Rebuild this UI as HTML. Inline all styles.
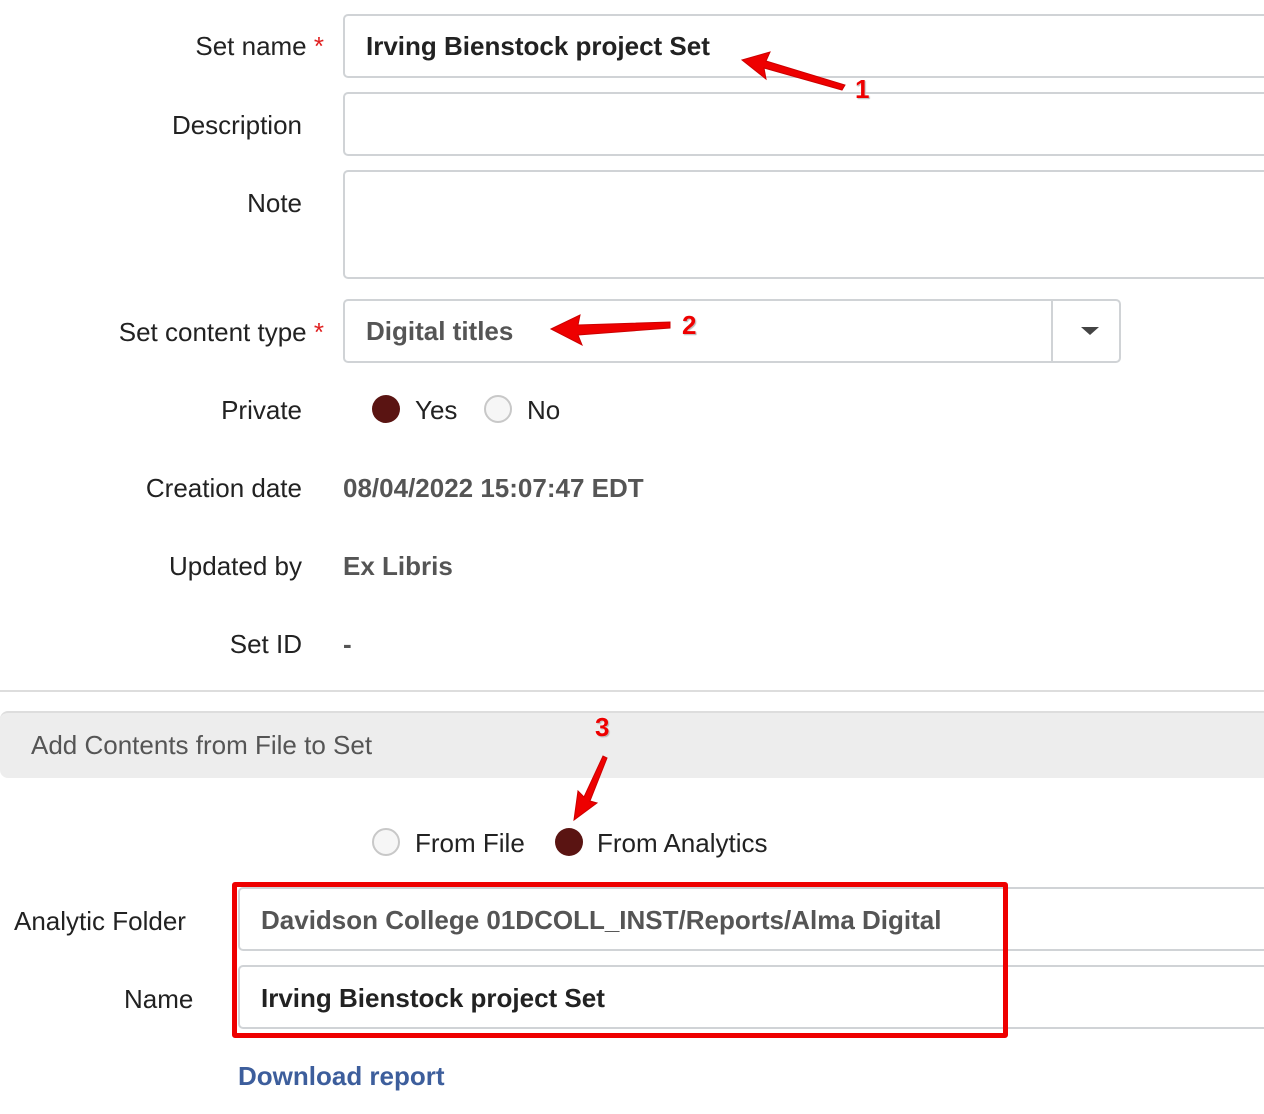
<!DOCTYPE html>
<html><head><meta charset="utf-8"><style>
body{margin:0;width:1264px;height:1114px;overflow:hidden;background:#fff;font-family:"Liberation Sans",sans-serif;position:relative;color:#222}
.a{position:absolute}
.lbl{position:absolute;font-size:26px;color:#222;text-align:right;right:962px;white-space:nowrap}
.req{color:#e02020}
.inp{position:absolute;border:2px solid #d0d3d6;border-radius:5px;background:#fff;box-sizing:border-box}
.val{position:absolute;font-size:26px;font-weight:bold;color:#555;white-space:nowrap}
.rad{position:absolute;width:28px;height:28px;border-radius:50%;box-sizing:border-box}
.on{background:#5a1412}
.off{background:#f6f6f6;border:2px solid #c8c8c8}
.num{position:absolute;font-size:26px;font-weight:bold;color:#e00;text-shadow:0 0 2px #fff,1px 1px 1px #999}
</style></head><body>
<div class="lbl" style="top:31px;right:940px">Set name <span class="req">*</span></div>
<div class="inp" style="left:343px;top:14px;width:940px;height:64px"></div>
<div class="val" style="left:366px;top:31px;color:#222">Irving Bienstock project Set</div>

<div class="lbl" style="top:110px">Description</div>
<div class="inp" style="left:343px;top:92px;width:940px;height:64px"></div>
<div class="lbl" style="top:188px">Note</div>
<div class="inp" style="left:343px;top:170px;width:940px;height:109px"></div>

<div class="lbl" style="top:317px;right:940px">Set content type <span class="req">*</span></div>
<div class="inp" style="left:343px;top:299px;width:778px;height:64px"></div>
<div class="a" style="left:1051px;top:301px;width:2px;height:60px;background:#d0d3d6"></div>
<div class="a" style="left:1081px;top:327px;width:0;height:0;border-left:9px solid transparent;border-right:9px solid transparent;border-top:8px solid #444"></div>
<div class="val" style="left:366px;top:316px">Digital titles</div>

<div class="lbl" style="top:395px">Private</div>
<div class="rad on" style="left:372px;top:395px"></div>
<div class="a" style="left:415px;top:395px;font-size:26px">Yes</div>
<div class="rad off" style="left:484px;top:395px"></div>
<div class="a" style="left:527px;top:395px;font-size:26px">No</div>

<div class="lbl" style="top:473px">Creation date</div>
<div class="val" style="left:343px;top:473px">08/04/2022 15:07:47 EDT</div>
<div class="lbl" style="top:551px">Updated by</div>
<div class="val" style="left:343px;top:551px">Ex Libris</div>
<div class="lbl" style="top:629px">Set ID</div>
<div class="val" style="left:343px;top:629px">-</div>

<div class="a" style="left:-10px;top:640px;width:1290px;height:50px;border-bottom:2px solid #ddd;border-left:2px solid #ddd;border-radius:0 0 0 8px"></div>
<div class="a" style="left:0;top:711px;width:1280px;height:67px;background:#ededed;border-top:2px solid #ddd;border-radius:8px 0 0 8px;box-sizing:border-box"></div>
<div class="a" style="left:31px;top:730px;font-size:26px;color:#555">Add Contents from File to Set</div>

<div class="rad off" style="left:372px;top:828px"></div>
<div class="a" style="left:415px;top:828px;font-size:26px">From File</div>
<div class="rad on" style="left:555px;top:828px"></div>
<div class="a" style="left:597px;top:828px;font-size:26px">From Analytics</div>

<div class="a" style="left:14px;top:906px;font-size:26px">Analytic Folder</div>
<div class="inp" style="left:238px;top:887px;width:1040px;height:64px"></div>
<div class="val" style="left:261px;top:905px">Davidson College 01DCOLL_INST/Reports/Alma Digital</div>
<div class="a" style="left:124px;top:984px;font-size:26px">Name</div>
<div class="inp" style="left:238px;top:965px;width:1040px;height:64px"></div>
<div class="val" style="left:261px;top:983px;color:#222">Irving Bienstock project Set</div>
<div class="a" style="left:232px;top:882px;width:776px;height:156px;border:5px solid #e00;box-sizing:border-box;border-radius:3px"></div>

<div class="a" style="left:238px;top:1061px;font-size:26px;font-weight:bold;color:#3d5e9c">Download report</div>

<svg class="a" style="left:0;top:0" width="1264" height="1114">
<g fill="#e00" stroke="#c00" stroke-width="1">
<polygon points="742,60 770,52 766,61 845,85 842,90 764,68 766,79"/>
<polygon points="551,329 580,315 578,325 670,322 670,328 578,335 582,345"/>
<polygon points="574,820 578,791 584,797 603,756 607,758 590,801 597,803"/>
</g></svg>
<div class="num" style="left:855px;top:74px">1</div>
<div class="num" style="left:682px;top:310px">2</div>
<div class="num" style="left:595px;top:712px">3</div>
</body></html>
